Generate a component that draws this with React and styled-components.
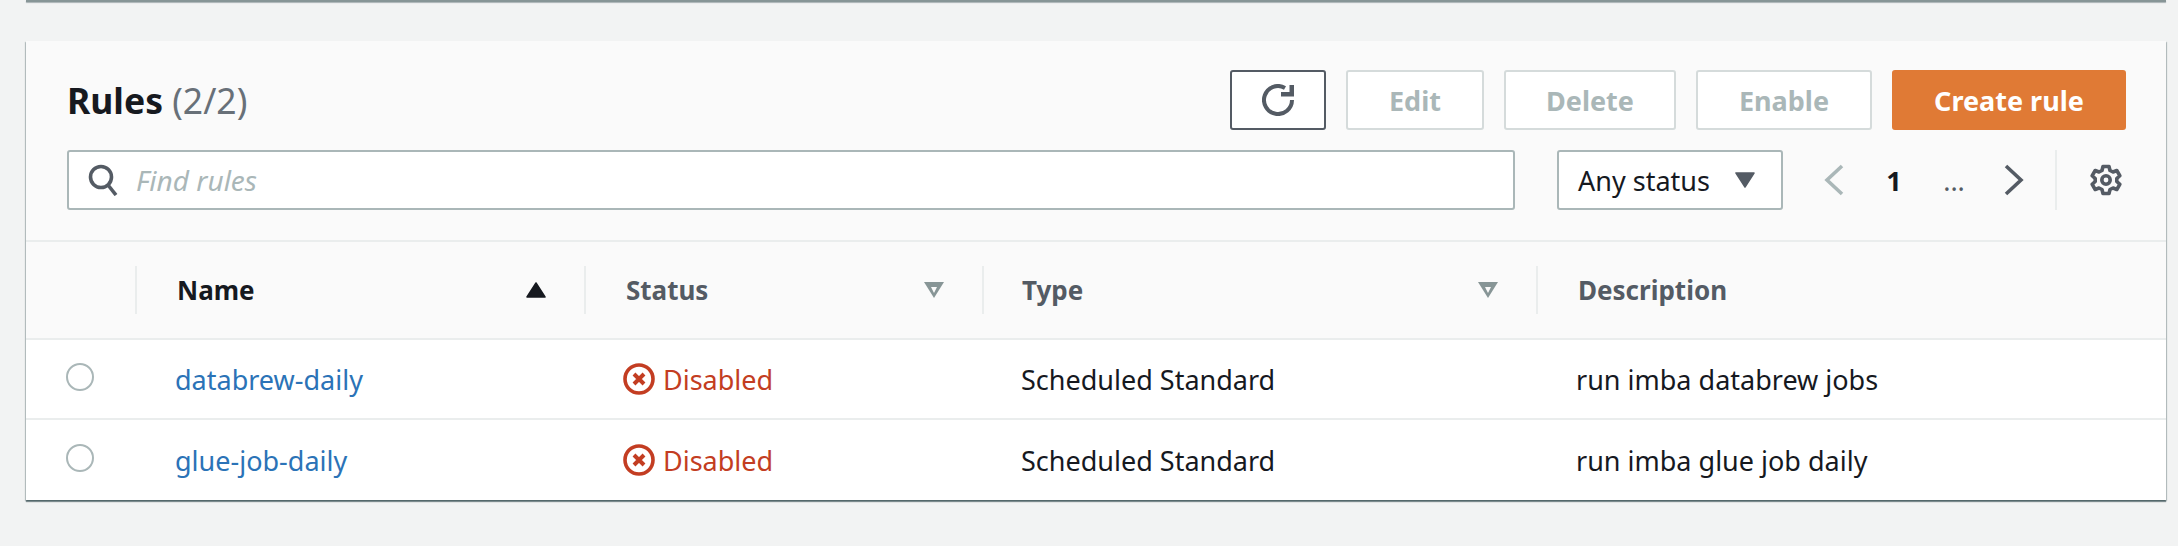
import React from 'react';
import styled, { createGlobalStyle } from 'styled-components';

const GlobalStyle = createGlobalStyle`
  html, body {
    margin: 0;
    background: #f2f3f3;
    font-family: "Noto Sans", "Open Sans", sans-serif;
    color: #16191f;
  }
`
const PAGE = styled.div`
  height: 546px;
  box-sizing: border-box;
  padding: 0 12px 0 26px;
  overflow: hidden;
`
const PREVCARD = styled.div`
  height: 2px;
  background: #879596;
  margin-bottom: 39px;
  box-shadow: 0 1px 1px rgba(0, 28, 36, 0.3);
`
const CARD = styled.section`
  background: #fff;
  box-shadow: 0 2px 1px 0 rgba(0, 28, 36, 0.45), 1px 1px 1px 0 rgba(0, 28, 36, 0.2), -1px 1px 1px 0 rgba(0, 28, 36, 0.2);
`
const TOOLBAR = styled.div`
  background: #fafafa;
  padding: 29px 40px 30px 41px;
  border-bottom: 2px solid #eaeded;
  display: flex;
  flex-direction: column;
  gap: 20px;
`
const ROW = styled.div`
  display: flex;
  align-items: center;
  justify-content: space-between;
`
const TITLE = styled.h2`
  margin: 0;
  font-size: 35.5px;
  font-weight: 700;
  line-height: 60px;
  color: #16191f;
`
const COUNT = styled.span`
  font-weight: 400;
  color: #687078;
`
const ACTIONS = styled.div`
  display: flex;
  gap: 20px;
`
const BUTTON = styled.button`
  box-sizing: border-box;
  width: ${props => props.$width}px;
  height: 60px;
  padding: 0;
  display: flex;
  align-items: center;
  justify-content: center;
  font-family: inherit;
  font-size: 27px;
  font-weight: 700;
  border-radius: 3px;
  background: ${props => props.$primary ? '#e07a35' : '#fff'};
  color: ${props => props.$primary ? '#fff' : '#aab7b8'};
  border: 2px solid ${props => props.$primary ? '#e07a35' : props.$active ? '#545b64' : '#d5dbdb'};
`
const SEARCH = styled.div`
  box-sizing: border-box;
  width: 1448px;
  height: 60px;
  background: #fff;
  border: 2px solid #aab7b8;
  border-radius: 3px;
  display: flex;
  align-items: center;
  padding-left: 19px;
  gap: 18px;
`
const PLACEHOLDER = styled.span`
  font-size: 28px;
  font-style: italic;
  color: #aab7b8;
`
const SELECT = styled.div`
  box-sizing: border-box;
  width: 226px;
  height: 60px;
  margin-left: 42px;
  background: #fff;
  border: 2px solid #aab7b8;
  border-radius: 3px;
  display: flex;
  align-items: center;
  justify-content: space-between;
  padding: 0 26px 0 19px;
  font-size: 27px;
`
const PAGER = styled.div`
  display: flex;
  margin-left: 21px;
`
const PAGEITEM = styled.div`
  width: 60px;
  height: 60px;
  display: flex;
  align-items: center;
  justify-content: center;
  font-size: 27px;
  font-weight: ${props => props.$current ? 700 : 400};
  color: ${props => props.$current ? '#16191f' : '#545b64'};
`
const SETTINGS = styled.div`
  height: 60px;
  margin-left: 11px;
  padding-left: 33px;
  flex: 1;
  border-left: 2px solid #eaeded;
  display: flex;
  align-items: center;
`
const GRID = styled.div`
  display: grid;
  grid-template-columns: 109px 449px 398px 554px 1fr;
`
const HEAD = styled.div`
  background: #fafafa;
  height: 96px;
  border-bottom: 2px solid #eaeded;
  display: flex;
  align-items: center;
`
const HEADINNER = styled.div`
  flex: 1;
  height: 48px;
  box-sizing: border-box;
  border-left: ${props => props.$first ? 'none' : '2px solid #eaeded'};
  padding: 0 38px 0 ${props => props.$pad}px;
  display: flex;
  align-items: center;
  justify-content: space-between;
  font-size: 26px;
  font-weight: 700;
  color: ${props => props.$sorted ? '#16191f' : '#545b64'};
`
const CELL = styled.div`
  box-sizing: border-box;
  height: 80px;
  border-bottom: ${props => props.$last ? 'none' : '2px solid #eaeded'};
  display: flex;
  align-items: center;
  gap: 8px;
  padding-left: ${props => props.$pad}px;
  font-size: 27px;
  color: #16191f;
`
const RADIO = styled.span`
  width: 28px;
  height: 28px;
  box-sizing: border-box;
  border: 2px solid #aab7b8;
  border-radius: 50%;
  background: #fff;
  margin-top: -5px;
`
const LINK = styled.a`
  color: #2b73b7;
`
const DISABLED = styled.span`
  color: #c33d22;
`

const SearchIcon = () => (
  <svg width="30" height="32" viewBox="0 0 30 32" fill="none" stroke="#545b64" strokeWidth="3.6">
    <circle cx="13" cy="13" r="10.5" />
    <path d="M20 21l8 10" />
  </svg>
)
const RefreshIcon = () => (
  <svg width="32" height="32" viewBox="0 0 32 32" fill="none">
    <path d="M23 3.9A14 14 0 1 0 30 16" stroke="#545b64" strokeWidth="4" />
    <path d="M19 12.5h13V1h-4.5v7H19z" fill="#545b64" />
  </svg>
)
const Caret = ({ up, color = '#545b64', w = 20, h = 16 }) => (
  <svg width={w} height={h} viewBox="0 0 20 16">
    <path d={up ? 'M10 1L19 15H1z' : 'M1 1H19L10 15z'} fill={color} stroke={color} strokeWidth="1.5" strokeLinejoin="round" />
  </svg>
)
const FilterIcon = () => (
  <svg width="20" height="16" viewBox="0 0 20 16">
    <path fillRule="evenodd" d="M0 0H20L10 16zM7 5l3 6 3-6z" fill="#879596" />
  </svg>
)
const Chevron = ({ left, color }) => (
  <svg width="20" height="32" viewBox="0 0 20 32" fill="none">
    <path d={left ? 'M18 2L3 16l15 14' : 'M2 2l15 14L2 30'} stroke={color} strokeWidth="3.6" />
  </svg>
)
const GearIcon = () => (
  <svg width="32" height="32" viewBox="0 0 32 32" fill="none" stroke="#545b64" strokeWidth="3.6" strokeLinejoin="round">
    <path d="M13 2.5h6l1 4 3 1.5 3.8-1.5 3 5.2-3 2.8v3l3 2.8-3 5.2-3.8-1.5-3 1.5-1 4h-6l-1-4-3-1.5-3.8 1.5-3-5.2 3-2.8v-3l-3-2.8 3-5.2 3.8 1.5 3-1.5z" />
    <circle cx="16" cy="16" r="4.2" />
  </svg>
)
const ErrorIcon = () => (
  <svg width="32" height="32" viewBox="0 0 32 32" fill="none" stroke="#c33d22">
    <circle cx="16" cy="16" r="14" strokeWidth="3.6" />
    <path d="M11 11l10 10M21 11L11 21" strokeWidth="4" />
  </svg>
)

const rules = [
  { name: 'databrew-daily', description: 'run imba databrew jobs' },
  { name: 'glue-job-daily', description: 'run imba glue job daily' },
]

export default function App() {
  return (
    <PAGE>
      <GlobalStyle />
      <PREVCARD />
      <CARD>
        <TOOLBAR>
          <ROW>
            <TITLE>Rules <COUNT>(2/2)</COUNT></TITLE>
            <ACTIONS>
              <BUTTON $width={96} $active><RefreshIcon /></BUTTON>
              <BUTTON $width={138}>Edit</BUTTON>
              <BUTTON $width={172}>Delete</BUTTON>
              <BUTTON $width={176}>Enable</BUTTON>
              <BUTTON $width={234} $primary>Create rule</BUTTON>
            </ACTIONS>
          </ROW>
          <ROW>
            <SEARCH>
              <SearchIcon />
              <PLACEHOLDER>Find rules</PLACEHOLDER>
            </SEARCH>
            <SELECT>
              Any status
              <Caret />
            </SELECT>
            <PAGER>
              <PAGEITEM><Chevron left color="#aab7b8" /></PAGEITEM>
              <PAGEITEM $current>1</PAGEITEM>
              <PAGEITEM>...</PAGEITEM>
              <PAGEITEM><Chevron color="#545b64" /></PAGEITEM>
            </PAGER>
            <SETTINGS><GearIcon /></SETTINGS>
          </ROW>
        </TOOLBAR>
        <GRID>
          <HEAD><HEADINNER $first /></HEAD>
          <HEAD><HEADINNER $pad={40} $sorted>Name <Caret up color="#16191f" /></HEADINNER></HEAD>
          <HEAD><HEADINNER $pad={40}>Status <FilterIcon /></HEADINNER></HEAD>
          <HEAD><HEADINNER $pad={38}>Type <FilterIcon /></HEADINNER></HEAD>
          <HEAD><HEADINNER $pad={40}>Description</HEADINNER></HEAD>
          {rules.map((rule, i) => {
            const last = i === rules.length - 1
            return (
              <React.Fragment key={rule.name}>
                <CELL $last={last} $pad={40}><RADIO /></CELL>
                <CELL $last={last} $pad={40}><LINK>{rule.name}</LINK></CELL>
                <CELL $last={last} $pad={39}><ErrorIcon /><DISABLED>Disabled</DISABLED></CELL>
                <CELL $last={last} $pad={39}>Scheduled Standard</CELL>
                <CELL $last={last} $pad={40}>{rule.description}</CELL>
              </React.Fragment>
            )
          })}
        </GRID>
      </CARD>
    </PAGE>
  )
}
